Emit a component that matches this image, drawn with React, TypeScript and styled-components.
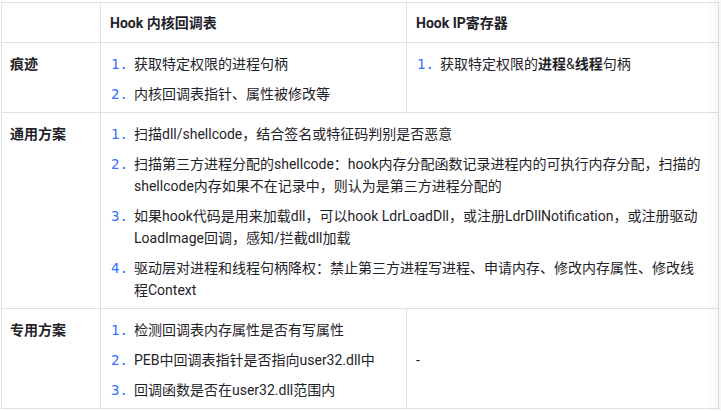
import styled, { createGlobalStyle } from 'styled-components'

const GlobalStyle = createGlobalStyle`
  html, body {
    margin: 0;
    padding: 0;
    background: #ffffff;
  }
  body {
    font-family: Roboto, "Noto Sans CJK SC", sans-serif;
    color: #1f2329;
  }
`

// right === null means the left list spans both columns
const rows: { label: string; left: React.ReactNode[]; right: React.ReactNode[] | null }[] = [
  {
    label: '痕迹',
    left: ['获取特定权限的进程句柄', '内核回调表指针、属性被修改等'],
    right: [
      <>
        获取特定权限的<b>进程</b>&amp;<b>线程</b>句柄
      </>,
    ],
  },
  {
    label: '通用方案',
    left: [
      '扫描dll/shellcode，结合签名或特征码判别是否恶意',
      '扫描第三方进程分配的shellcode：hook内存分配函数记录进程内的可执行内存分配，扫描的shellcode内存如果不在记录中，则认为是第三方进程分配的',
      '如果hook代码是用来加载dll，可以hook LdrLoadDll，或注册LdrDllNotification，或注册驱动LoadImage回调，感知/拦截dll加载',
      '驱动层对进程和线程句柄降权：禁止第三方进程写进程、申请内存、修改内存属性、修改线程Context',
    ],
    right: null,
  },
  {
    label: '专用方案',
    left: ['检测回调表内存属性是否有写属性', 'PEB中回调表指针是否指向user32.dll中', '回调函数是否在user32.dll范围内'],
    right: [],
  },
]

export default function App() {
  return (
    <>
      <GlobalStyle />
      <Page>
        <Table>
          <colgroup>
            <col style={{ width: 99 }} />
            <col style={{ width: 306 }} />
            <col style={{ width: 312 }} />
          </colgroup>
          <thead>
            <tr>
              <HeadCell />
              <HeadCell>Hook 内核回调表</HeadCell>
              <HeadCell>Hook IP寄存器</HeadCell>
            </tr>
          </thead>
          <tbody>
            {rows.map((row) => (
              <tr key={row.label}>
                <LabelCell>{row.label}</LabelCell>
                <Cell colSpan={row.right === null ? 2 : 1}>
                  <NumberedList items={row.left} />
                </Cell>
                {row.right === null ? null : row.right.length === 0 ? (
                  <Cell $middle>
                    <Dash>-</Dash>
                  </Cell>
                ) : (
                  <Cell>
                    <NumberedList items={row.right} />
                  </Cell>
                )}
              </tr>
            ))}
          </tbody>
        </Table>
        <EdgeShade />
      </Page>
    </>
  )
}

const NumberedList = ({ items }: { items: React.ReactNode[] }) => (
  <List>
    {items.map((item, i) => (
      <ListItem key={i}>
        <Marker>{i + 1}.</Marker>
        <ItemText>{item}</ItemText>
      </ListItem>
    ))}
  </List>
)

const Page = styled.div`
  position: relative;
  padding: 2px 0 0 1px;
  width: 721px;
  height: 411px;
  box-sizing: border-box;
  overflow: hidden;
`

const Table = styled.table`
  border-collapse: collapse;
  table-layout: fixed;
  width: 718px;
  font-size: 14px;
  line-height: 22px;
`

const HeadCell = styled.th`
  height: 39px;
  padding: 0 9px;
  border: 1px solid #dee0e3;
  text-align: left;
  font-weight: 700;
  font-size: 14px;
  color: #1f2329;
  vertical-align: middle;
`

const Cell = styled.td<{ $middle?: boolean }>`
  padding: 10px 12px 7px 10px;
  border: 1px solid #dee0e3;
  vertical-align: ${(p) => (p.$middle ? 'middle' : 'top')};
`

const LabelCell = styled.td`
  padding: 10px 8px 7px 8px;
  border: 1px solid #dee0e3;
  vertical-align: top;
  font-weight: 700;
`

const List = styled.ol`
  list-style: none;
  margin: 0;
  padding: 0;
  display: flex;
  flex-direction: column;
  gap: 8px;
`

const ListItem = styled.li`
  display: flex;
  align-items: flex-start;
  line-height: 22px;
`

const Marker = styled.span`
  flex: 0 0 23px;
  height: 22px;
  color: #3370ff;
  font-family: "DejaVu Sans Mono", monospace;
  font-size: 14px;
`

const ItemText = styled.span`
  flex: 1;
  b {
    font-weight: 700;
  }
`

const Dash = styled.span`
  margin-left: -1px;
`

const EdgeShade = styled.div`
  position: absolute;
  top: 0;
  right: 0;
  width: 14px;
  height: 100%;
  background: linear-gradient(to right, rgba(0, 0, 0, 0), rgba(0, 0, 0, 0.035));
  pointer-events: none;
`
